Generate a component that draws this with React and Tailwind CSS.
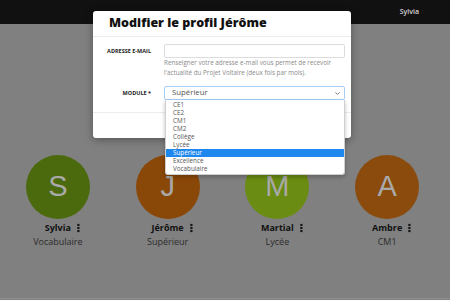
import React from 'react';
import { ChevronDown } from 'lucide-react';

const profiles = [
  { name: 'Sylvia', module: 'Vocabulaire', color: 'bg-[#4b6a0d]' },
  { name: 'Jérôme', module: 'Supérieur', color: 'bg-[#8a4808]' },
  { name: 'Martial', module: 'Lycée', color: 'bg-[#6a8c12]' },
  { name: 'Ambre', module: 'CM1', color: 'bg-[#8b4b0c]' },
];

const modules = ['CE1', 'CE2', 'CM1', 'CM2', 'Collège', 'Lycée', 'Supérieur', 'Excellence', 'Vocabulaire'];

function Kebab() {
  return (
    <svg width="3" height="9" viewBox="0 0 3 9" className="absolute left-full top-1/2 ml-[6px] -translate-y-1/2">
      <rect x="0.3" y="0.3" width="2.2" height="2.2" fill="#151515" />
      <rect x="0.3" y="3.4" width="2.2" height="2.2" fill="#151515" />
      <rect x="0.3" y="6.5" width="2.2" height="2.2" fill="#151515" />
    </svg>
  );
}

function ProfileCard({ profile }) {
  return (
    <div className="flex flex-col items-center">
      {/* Avatar */}
      <div
        className={`flex h-[64px] w-[64px] items-center justify-center rounded-full ${profile.color} font-['Liberation_Sans',sans-serif] text-[29px] text-[#a9a9a9]`}
      >
        {profile.name[0]}
      </div>
      <div className="relative mt-[3px] text-[9px] font-bold leading-[12px] text-[#111]">
        {profile.name}
        <Kebab />
      </div>
      <div className="mt-[2px] text-[9px] leading-[12px] text-[#2c2c2c]">{profile.module}</div>
    </div>
  );
}

export default function App() {
  return (
    <div className="relative h-[300px] w-[450px] overflow-hidden bg-[#808080] font-['Open_Sans',sans-serif]">
      {/* Top bar */}
      <header className="flex h-[24px] items-center justify-end bg-[#111] pr-[31px]">
        <span className="text-[7px] font-semibold text-[#d8d8d8]">Sylvia</span>
      </header>

      {/* Profiles */}
      <main className="grid grid-cols-4 pl-[3px] pr-[8px] pt-[131px]">
        {profiles.map((p) => (
          <ProfileCard key={p.name} profile={p} />
        ))}
      </main>
      <div className="absolute bottom-[1px] left-0 h-[1px] w-full bg-[#8f8f8f]" />

      {/* Modal */}
      <div className="absolute left-[93px] top-[11px] w-[258px] rounded-[3px] bg-white shadow-[0_2px_8px_rgba(0,0,0,0.35)]">
        <div className="flex h-[26px] items-center border-b border-[#ececec] px-[16px]">
          <h2 className="text-[12.5px] font-extrabold text-[#111]">Modifier le profil Jérôme</h2>
        </div>

        <div className="pb-[12px] pt-[7px]">
          <div className="flex">
            <div className="flex h-[14px] w-[58px] items-center justify-end text-[5.5px] font-bold text-[#222]">
              ADRESSE E-MAIL
            </div>
            <div className="ml-[13px] w-[181px]">
              <div className="h-[14px] rounded-[2px] border border-[#dcdcdc] bg-white" />
              <p className="text-[6.3px] leading-[10px] text-[#8a8a8a]">
                Renseigner votre adresse e-mail vous permet de recevoir
                <br />
                l'actualité du Projet Voltaire (deux fois par mois).
              </p>
            </div>
          </div>

          <div className="mt-[8px] flex">
            <div className="flex h-[14px] w-[58px] items-center justify-end text-[5.5px] font-bold text-[#222]">
              MODULE *
            </div>
            <div className="ml-[13px] w-[181px]">
              <div className="flex h-[14px] items-center justify-between rounded-[2px] border border-[#a6cdf5] bg-white pl-[7px] pr-[3px] text-[7.8px] text-[#555]">
                <span>Supérieur</span>
                <ChevronDown size={7} strokeWidth={2.5} className="text-[#444]" />
              </div>
            </div>
          </div>
        </div>

        <div className="flex h-[26px] items-center justify-end gap-[6px] border-t border-[#ececec] pr-[7px]">
          <button className="h-[15px] rounded-[2px] border border-[#ccc] px-[8px] text-[6px] text-[#444]">Annuler</button>
          <button className="h-[15px] rounded-[2px] border border-[#ccc] px-[8px] text-[6px] text-[#444]">Enregistrer</button>
        </div>
      </div>

      {/* Open select list */}
      <ul className="absolute left-[165px] top-[100px] w-[180px] rounded-b-[3px] border border-t-0 border-[#cfcfcf] bg-white pb-[1px] pt-[1px] shadow-[0_2px_4px_rgba(0,0,0,0.25)]">
        {modules.map((m) => (
          <li
            key={m}
            className={`h-[8px] pl-[7px] text-[6.3px] leading-[8px] ${
              m === 'Supérieur' ? 'bg-[#1e88ef] text-white' : 'text-[#555]'
            }`}
          >
            {m}
          </li>
        ))}
      </ul>
    </div>
  );
}
